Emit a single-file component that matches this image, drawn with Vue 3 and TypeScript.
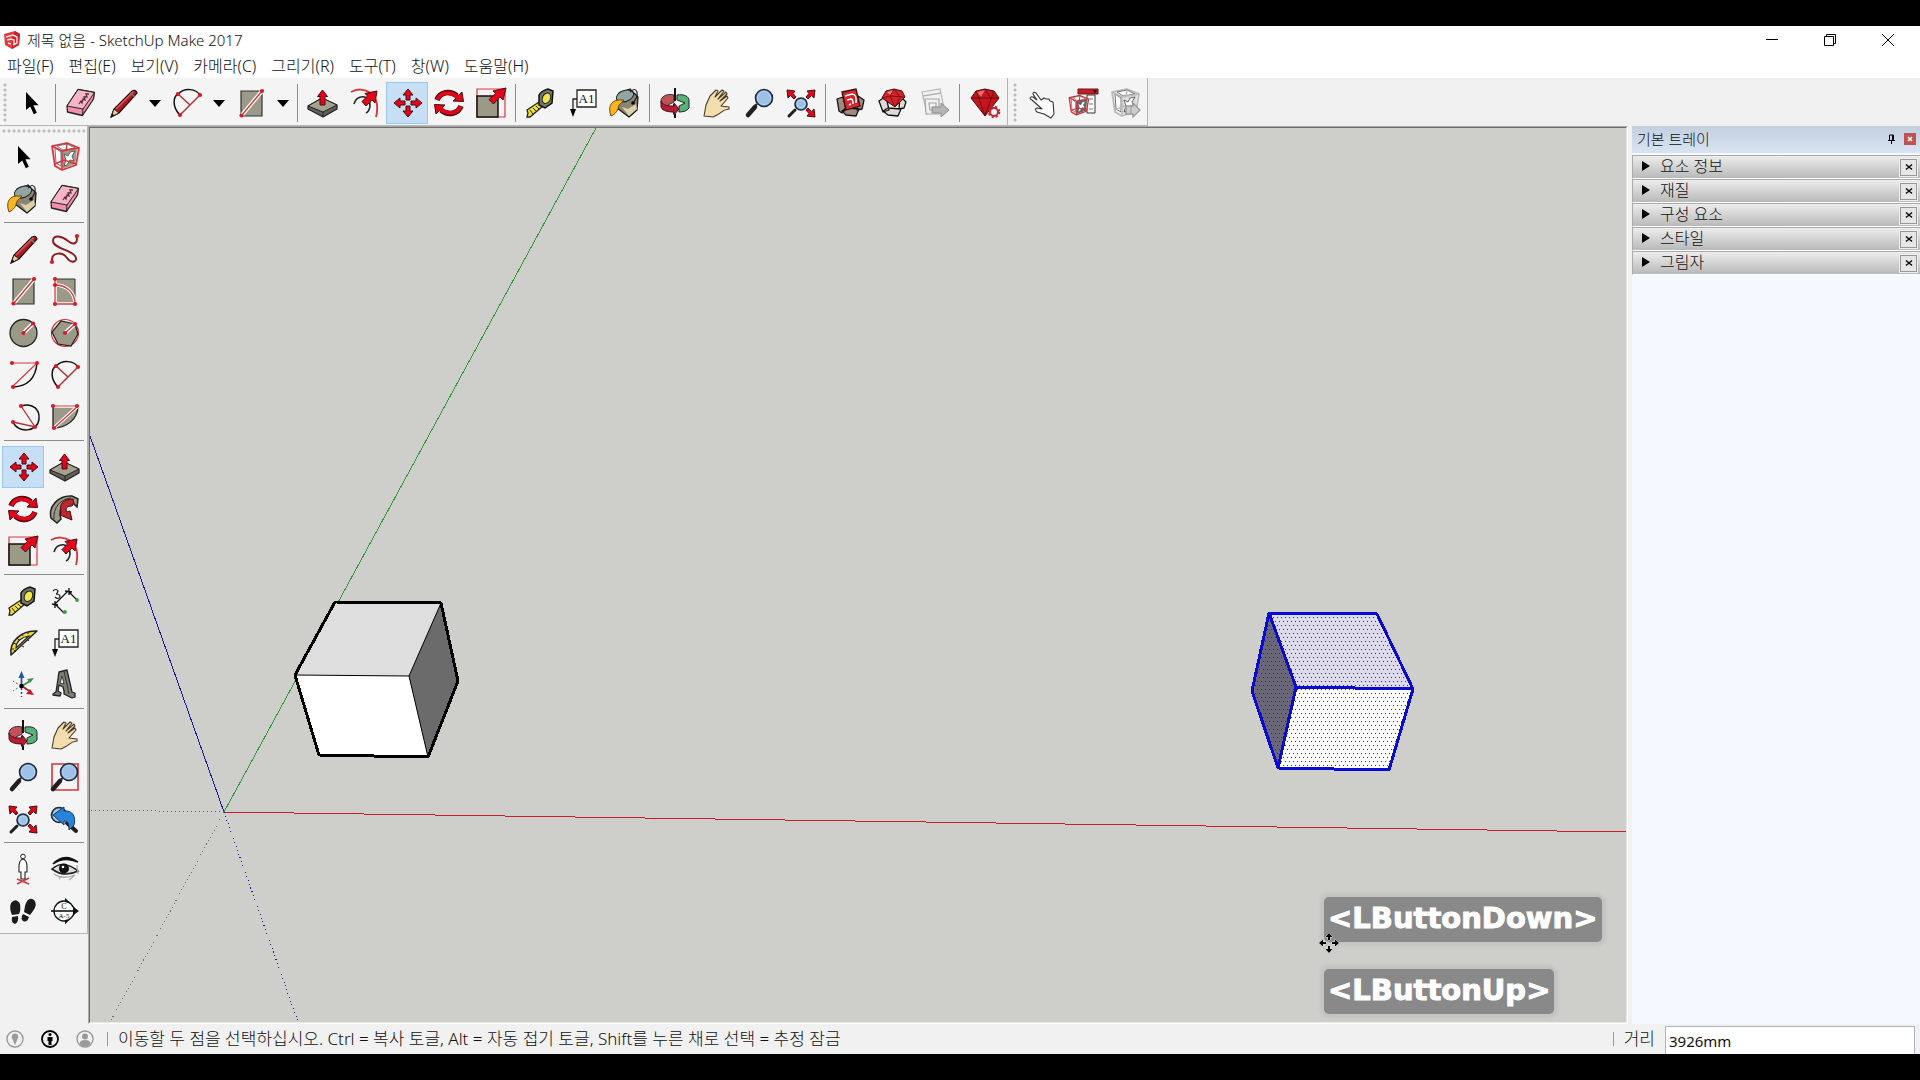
<script setup lang="ts">
import { ref } from 'vue'

type Tool = { icon: string; label: string; menu?: boolean }

const cube = (ink: string, fill: string, face: string) =>
  `<path d="M3 5l15-3 12 5-3 17-14 5-7-4z" fill="${fill}" stroke="${ink}" stroke-width="1.700" stroke-linejoin="round"/>
   <path d="M13 10l15-2-2 15-13 5z" fill="${face}"/>
   <path d="M6 7l6 4v14l-5-3zM8 5l10-2 8 4-12 2z" fill="#fff" stroke="#555" stroke-width=".8"/>
   <path d="M15 13l4 2 2-4 5-1-3 5 2 5-4-1-3 5-3 1 2-6z" fill="#fff" stroke="#444" stroke-width=".8"/>
   <path d="M3 5l10 5 17-3M13 10v18M18 3l-1 6M6 23l9-4 12 4" fill="none" stroke="${ink}" stroke-width="1.400"/>`

const lens = (cx: number, cy: number, r: number) =>
  `<circle cx="${cx}" cy="${cy}" r="${r}" fill="#8fb3dc" stroke="#1d2a3c" stroke-width="1.6"/>
   <circle cx="${cx}" cy="${cy}" r="${r - 2}" fill="#9cc0e6" stroke="#b9d2ec" stroke-width="1"/>`

const redArrow = 'fill="#e3061b" stroke="#4a0a0e" stroke-width="1" stroke-linejoin="round"'
const dot = (x: number, y: number) => `<circle cx="${x}" cy="${y}" r="2.1" fill="#d61a28"/>`

const icons: Record<string, string> = {
  select: '<path d="M11 5v18l4.200-3.600 3.600 7.800 3-1.400-3.400-7.600h5.200z" fill="#000"/>',
  component: cube('#d8323c', '#f9e3e4', '#9b9a86'),
  eraser: `<path d="M2 19L13 2.500 29.500 5.500 28.500 12 17.500 28.500 2.500 25z" fill="#f58fae" stroke="#222" stroke-width="1.3" stroke-linejoin="round"/>
    <path d="M13 2.500l16.500 3L18 22 2 19z" fill="#f9b5c8" stroke="#222" stroke-width="1"/><path d="M18 22l-.5 6" stroke="#222"/>
    <path d="M14 17l2-3 1 2 1-4 2 1-1-3 3 0-1-3 3 0" fill="none" stroke="#5a2b3b" stroke-width="1.3"/>`,
  pencil: `<path d="M4 30l3-8L25 4q4-2 5 2L12 26z" fill="#a81d25" stroke="#2a0a0b" stroke-width="1.2"/>
    <path d="M9 22L26.500 4.500" stroke="#df5a5c" stroke-width="1.500"/><path d="M4 30l3-8 5 4z" fill="#e6cf9c" stroke="#222"/><path d="M4 30l1.200-3.500 2.400 2z" fill="#111"/>
    <path d="M23 6l5 4" stroke="#777" stroke-width="1.600"/>`,
  freehand: `<path d="M3 29C2 18 14 19 18 25s12 4 8-2S4 15 4 8 13 3 19 8s11 2 8-6" fill="none" stroke="#8e1b23" stroke-width="1.900"/>${dot(3, 29)}${dot(28, 3)}`,
  rect: `<path d="M6 4h21v25H6z" fill="#9b9a86" stroke="#333" stroke-width="1.200"/><path d="M7 28L27 4" stroke="#fff" stroke-width="4"/><path d="M7 28L27 4" stroke="#c63a42" stroke-width="1.400"/>${dot(6.5, 28.5)}${dot(27, 4)}`,
  rotrect: `<path d="M6 4h20v25H6z" fill="#9b9a86" stroke="#333"/><path d="M6 4v25h20C26 17 17 10 6 10" fill="none" stroke="#fff" stroke-width="3.500"/><path d="M6 4v25h20C26 17 17 10 6 10" fill="none" stroke="#d23a42" stroke-width="1.300"/>${dot(6, 4)}${dot(6, 10)}${dot(6, 29)}${dot(26, 29)}`,
  circle: `<circle cx="16.500" cy="16" r="13.500" fill="#9b9a86" stroke="#222" stroke-width="1.300"/><path d="M16.500 16l9-9" stroke="#fff" stroke-width="4"/><path d="M16.500 16l9-9" stroke="#c63a42" stroke-width="1.400"/>${dot(16.5, 16)}${dot(26, 6.5)}`,
  polygon: `<circle cx="16" cy="16" r="13.500" fill="#fbeeee" stroke="#d6343c" stroke-width="1.200"/><path d="M26 7L12 4 3 15l6 12 13 2 7-12z" fill="#9b9a86" stroke="#222" stroke-width="1.200"/><path d="M16 16l10-9" stroke="#fff" stroke-width="4"/><path d="M16 16l10-9" stroke="#c63a42" stroke-width="1.400"/>${dot(16, 16)}${dot(26, 7)}`,
  arc: `<path d="M30 4Q28 27 6 28" fill="none" stroke="#111" stroke-width="1.500"/><path d="M5 4h25L5 28" fill="none" stroke="#d6343c" stroke-width="1.100"/>${dot(5, 4)}${dot(30, 4)}${dot(6, 28)}`,
  arc2: `<path d="M9 28C1 20 2 10 7 7c7-7 18-5 22 1" fill="none" stroke="#111" stroke-width="1.500"/><path d="M29 8L9 28M7 7l12 11" fill="none" stroke="#b33138" stroke-width="1.500"/>${dot(29, 8)}${dot(9, 28)}${dot(7, 7)}`,
  arc3: `<path d="M14 5C26 1 33 9 32 18c-1 13-21 15-26 3" fill="none" stroke="#111" stroke-width="1.500"/><path d="M14 5l14 21-22-5" fill="none" stroke="#b33138" stroke-width="1.300"/>${dot(14, 5)}${dot(28, 26)}${dot(6, 21)}`,
  pie: `<path d="M4 5h25C29 18 18 27 4 27z" fill="#9b9a86" stroke="#222" stroke-width="1.300"/><path d="M5 27L29 5H4" fill="none" stroke="#fff" stroke-width="3.500"/><path d="M5 27L29 5H4" fill="none" stroke="#d6343c" stroke-width="1.200"/>${dot(4, 5)}${dot(28, 5)}${dot(5, 27)}`,
  move: `<g ${redArrow}><path d="M17 2l5 6h-3v5h-4V8h-3z"/><path d="M17 30l5-6h-3v-5h-4v5h-3z"/><path d="M3 16l6-5v3h5v4H9v3z"/><path d="M31 16l-6-5v3h-5v4h5v3z"/></g>`,
  pushpull: `<path d="M1 19l14-8 15 7v4L16 30 1 22z" fill="#5f6057" stroke="#222" stroke-width="1.300" stroke-linejoin="round"/><path d="M1 19l14-8 15 7-14 7z" fill="#a3a28f" stroke="#222" stroke-linejoin="round"/><path d="M16 25v5" stroke="#222"/><path d="M15.500 3l5 6.500h-2.500V18h-5V9.500h-2.500z" ${redArrow}/>`,
  rotate: `<g fill="none" stroke="#4a0a0e" stroke-width="5.500"><path d="M4 13C7 5 17 3 24 9"/><path d="M28 19C25 27 15 29 8 23"/></g>
    <g ${redArrow}><path d="M20 14l10.500.5L29 5z"/><path d="M12 18L1.500 17.500 3 27z"/></g>
    <g fill="none" stroke="#e3061b" stroke-width="3.800"><path d="M4.500 12.500C8 5 17 4 25 10"/><path d="M27.500 19.500C24 27 15 28 7 22"/></g>`,
  follow: `<path d="M2 25C-1 13 10 2 23 3l6 3-1 8-4-4C13 8 9 17 12 26l-4 4z" fill="#9b9a86" stroke="#222" stroke-width="1.500"/><path d="M5 26C4 15 11 6 22 5" fill="none" stroke="#333"/><path d="M24 6C14 6 10 11 12 19l-1 3 12 5-2-9-3 1c-2-4 0-6 5-6l2-3z" fill="#bd2630" stroke="#4a0a0e"/>`,
  scale: `<path d="M2 2h28v28H2z" fill="#faf1f2" stroke="#d23a42" stroke-width="1.200"/><path d="M2 9h21v21H2z" fill="#9b9a86" stroke="#111" stroke-width="1.500"/><path d="M31 1l-3 12-3-3-6.500 7-4.500-4.500 6.500-6L18 4z" ${redArrow}/>`,
  offset: `<path d="M2 5c12-7 31 1 25 25" fill="none" stroke="#d23a42" stroke-width="1.900"/><path d="M5 17c2-10 17-10 16 2-.5 4-2 6-4 7" fill="none" stroke="#222" stroke-width="1.600"/><path d="M28 4l-2 12-3-3-6 6-4-4.500 5.500-5.500-2.500-2.500z" ${redArrow}/>`,
  tape: `<path d="M2 23l12-8 4 4L5 30H2l1-4z" fill="#eee12d" stroke="#222" stroke-width="1.300"/><path d="M5 23l3 4M8 21l3 3M11 19l3 3" stroke="#222"/><path d="M14 8q2-4 9-6l5 2-1 12-7 5-6-3z" fill="#75746b" stroke="#111" stroke-width="1.500"/><ellipse cx="21.500" cy="11" rx="4" ry="5.500" fill="#f0e54a" stroke="#222" transform="rotate(25 21 11)"/>`,
  dimension: `<path d="M6 19L19 6M3 19l6 1M6 16v7M16 6l7 1M20 3v7M19 6l9 9M6 19l9 9" fill="none" stroke="#111" stroke-width="1.300"/><path d="M4 6q3-3 5 0-1 3-2 3 4 0 4 3-2 3-5 0" fill="none" stroke="#111" stroke-width="1.200"/><circle cx="28" cy="15" r="1.900" fill="#3c9c44"/><circle cx="16" cy="27" r="1.900" fill="#3c9c44"/>`,
  protractor: `<path d="M4 28C2 14 15 3 30 4z" fill="#e9d84e" stroke="#222" stroke-width="1.500" stroke-linejoin="round"/><path d="M9 21c0-7 6-11 13-12z" fill="#f4f4f4" stroke="#222" stroke-width="1.200"/><path d="M4 22l3 0M6 16l3 1M10 11l2 2M15 7l1 2M21 5l0 2M9 25l-2-2M15 19l2 1M21 13l1 1" stroke="#222"/>`,
  text: `<path d="M10 3h19v17H10z" fill="#fff" stroke="#222" stroke-width="1.300"/><path d="M10 12H6v12" fill="none" stroke="#222" stroke-width="1.300"/><path d="M3 22h6l-3 8z" fill="#000"/><text x="19.500" y="16" text-anchor="middle" font-family="Liberation Serif, serif" font-size="13" fill="#111">A1</text>`,
  axes: `<path d="M14.500 17V7" stroke="#2554a4" stroke-width="1.800"/><path d="M14.500 2l3 7h-6z" fill="#2554a4"/><path d="M15 17l8-5" stroke="#438b51" stroke-width="1.800"/><path d="M27 9l-7 1 3 4z" fill="#438b51"/><path d="M15 17l7 5" stroke="#a42630" stroke-width="1.800"/><path d="M27 26l-8-1 4-5z" fill="#c31d2b"/><path d="M14.500 19v9" stroke="#334c91" stroke-width="1.500" stroke-dasharray="2 2"/><path d="M14 17l-8 5" stroke="#3a8a4a" stroke-dasharray="2 2"/><path d="M14 17l-8-5" stroke="#a33" stroke-dasharray="2 2"/><circle cx="14.500" cy="17" r="2.200"/>`,
  text3d: `<path d="M4 25l3-2 3-20 8-2 5 22 3 1v4l-3 1-8-4v-3l-1-4-4-2-1 6 3 2-1 3-7-1z" fill="#7f7e71" stroke="#222" stroke-width="1.300" stroke-linejoin="round"/><path d="M11 14l2-7 2 8z" fill="#f4f4f4" stroke="#222" stroke-width=".8"/><path d="M15 2l5 23" stroke="#333"/>`,
  paint: `<path d="M10 6l11-4 8 8-1 13-8 7-12-9z" fill="#8b8476" stroke="#1b1b1b" stroke-width="1.300" stroke-linejoin="round"/><ellipse cx="16" cy="9" rx="9" ry="5.500" transform="rotate(-20 16 9)" fill="#91a5a4" stroke="#222"/><path d="M13 20l7 9 8-7-1-5-8 5z" fill="#ddd2a6"/><path d="M9 13C1 14-1 21 2 29c5-2 7-6 8-11l5-5z" fill="#f8b51c" stroke="#6f4b0a"/><path d="M21 5q5-5 7 0 1 5-4 11" fill="none" stroke="#222" stroke-width="1.200"/><circle cx="24" cy="16" r="1.800"/>`,
  orbit: `<path d="M15 8C7 6 2 10 2 14l1 7 7 2-1-5 6-3z" fill="#c05259" stroke="#333"/><path d="M18 8c7-1 12 1 12 6v7c-2 3-6 4-10 4v-6l6-3-8-3z" fill="#58b277" stroke="#222"/><path d="M15 17v10" stroke="#111" stroke-width="2"/><path d="M2 14c2 5 8 5 13 5v-3l5 6-5 6v-3C7 25 2 23 2 19z" fill="#b61c33" stroke="#46101a"/><path d="M16 1v13M16 27v4" stroke="#111" stroke-width="2"/>`,
  pan: `<path d="M3 29l2-11L9 9l6-6 2 1-3 6 7-7 2 1-6 8 8-7 1 2-7 7 7-5 1 2-7 8 8 1v2c-8 1-7 4-12 6l-4 2z" fill="#f3dcae" stroke="#493b29" stroke-width="1.100" stroke-linejoin="round"/>`,
  zoom: `<path d="M5 28l7-8" stroke="#1f1f1f" stroke-width="4.500" stroke-linecap="round"/><path d="M12 19l2-2" stroke="#222" stroke-width="2"/>${lens(21, 11, 8.5)}`,
  zoomwin: `<path d="M3 3h26v26H3z" fill="none" stroke="#d8323c" stroke-width="1.600"/><path d="M4 28l7-8" stroke="#1f1f1f" stroke-width="4.500" stroke-linecap="round"/><path d="M11 19l3-2" stroke="#222" stroke-width="2"/>${lens(20, 11, 8.5)}`,
  extents: `<g ${redArrow}><path d="M2 3l8 1-2 2.500 3 3.500-2 2-3.500-3.500L3 11z"/><path d="M30 3l-8 1 2 2.500-3 3.500 2 2 3.500-3.500L29 11z"/><path d="M30 30l-8-1 2-2.500-3-3.500 2-2 3.500 3.500L29 22z"/></g><path d="M4 29l6-6" stroke="#1f1f1f" stroke-width="3" stroke-linecap="round"/>${lens(16, 17, 6)}`,
  previous: `<path d="M18 20l9 8" stroke="#1f1f1f" stroke-width="4" stroke-linecap="round"/>${lens(10, 12, 7.5)}<path d="M4 12l11-8v4c9-1 12 6 10 14l-5 5c0-7-1-9-5-9v4z" fill="#2884d8" stroke="#173962"/>`,
  camera: `<path d="M10 31l12-6M10 26l12 5" stroke="#d23a42" stroke-width="1.500"/><circle cx="16" cy="3.500" r="2.300" fill="#fff" stroke="#222"/><path d="M16 6q4 1 4 8v5h-2v7h-4v-7h-2v-5q0-7 4-8z" fill="#fff" stroke="#222" stroke-width="1.100"/>`,
  look: `<path d="M4 11Q15-1 29 9 15 3 4 11z" fill="#111" stroke="#111" stroke-width="1.500"/><path d="M3 16Q14 6 29 18 15 25 3 16z" fill="#ddd" stroke="#222" stroke-width="1.600"/><circle cx="15" cy="15.500" r="5" fill="#111"/><circle cx="14" cy="14" r="1.300" fill="#fff"/><path d="M5 21q8 6 21 1M10 26l3-3M20 27l6-5M28 12l1 9" fill="none" stroke="#aaa" stroke-width="1.300"/>`,
  walk: `<g fill="#1b1b1b"><path d="M4 8q5-6 9 1 1 6-1 10l-7 1Q2 13 4 8z"/><path d="M5 22l6-1q1 6-3 8-4-1-3-7z"/><path d="M18 11q3-10 9-6 4 4-1 11l-3 4-6-3z"/><path d="M16 19l6 3q-2 6-6 4-3-2 0-7z"/></g>`,
  section: `<path d="M16 3l13 13-13 13z" fill="#111"/><circle cx="15" cy="16" r="10" fill="#fff" stroke="#111" stroke-width="1.300"/><path d="M16 3l5 5-5-1zM16 29l5-5-5 1z" fill="#111"/><path d="M2 16h27" stroke="#111" stroke-width="1.600"/><path d="M24 12l6 4-6 4z" fill="#111"/><text x="15" y="14" text-anchor="middle" font-family="Liberation Serif, serif" font-size="8">C</text><text x="15" y="23" text-anchor="middle" font-family="Liberation Serif, serif" font-size="7">A-5</text>`,
  warehouse: `<path d="M2 12l6-2 3 12-4 4-3-2zM29 13l-6-4-1 14 5-1zM7 24l4-3 13 1-3 7-10-1z" fill="#a08a7e" stroke="#111" stroke-width="1.300" stroke-linejoin="round"/><path d="M7 5l14-3 4 17-14 4z" fill="#d3272f" stroke="#3d080b" stroke-width="1.300"/><path d="M10 9l7-2q5 0 4 9M12 13l4-1q2 0 2 5M14 18l2-1" fill="none" stroke="#fff" stroke-width="1.500"/>`,
  extensions: `<path d="M2 14l7-5 3 14-6 2zM29 15l-6-6-1 13 5-1zM6 24l5-3 13 1-3 7-10-1z" fill="#dedbd5" stroke="#111" stroke-width="1.300" stroke-linejoin="round"/><path d="M9 4l8-2 8 2 3 6-10 10L5 11z" fill="#d3242c" stroke="#4b0a0e"/><path d="M5 11l8-2 15 1M13 9l4-7 6 8-5 10z" fill="none" stroke="#7a1016"/><path d="M10 5l6-2-3 5z" fill="#f07b7d"/>`,
  share: `<path d="M3 5l18-3 4 19-17 6z" fill="#f2f2f2" stroke="#b5b5b5" stroke-width="1.200"/><path d="M4 9l18-3" stroke="#b5b5b5" stroke-width="1.500"/><path d="M6 12h14v15H7z" fill="#f0f0f0" stroke="#a5a5a5" stroke-width="1.200"/><path d="M10 16h7v7h-6z" fill="none" stroke="#a5a5a5" stroke-width="1.200"/><path d="M13 20h9v-4l8 7-8 7v-4h-9z" fill="#b5b5b5" stroke="#8c8c8c"/>`,
  ruby: `<path d="M2 11l5-7 9-2 9 2 5 7-14 18z" fill="#c4161e" stroke="#4e090d"/><path d="M2 11h28M7 4l3 8 6-10 6 10 3-8M10 12l6 17 6-17" fill="none" stroke="#75090f"/><path d="M8 5l8-2-4 7z" fill="#ed6d6f"/><circle cx="25" cy="25" r="4" fill="#f4f4f4" stroke="#b8272f" stroke-width="2"/><circle cx="25" cy="25" r="5.500" fill="none" stroke="#b8272f" stroke-width="1.600" stroke-dasharray="2.200 2.200"/>`,
  interact: `<path d="M7 13C4 12 5 9 8 10l4 3-4-6q0-3 3-1l5 7 3-2 2 1 3 0 1 2 3 1 1 12-3 4-7-4-7-2q-3-3 0-4l5 1z" fill="#fff" stroke="#333" stroke-width="1.100" stroke-linejoin="round"/>`,
  options: `<path d="M11 2h20v5H11z" fill="#bd1f2b" stroke="#70121a"/><path d="M26 3.500h4l-2 2.500z"/><path d="M20 8h8v18h-8z" fill="#fff" stroke="#333"/><path d="M22 12h4M22 17h4M22 22h4" stroke="#777"/><g transform="translate(0 7) scale(.72)">${cube('#c9323c', '#f4c9cb', '#666')}</g>`,
  attributes: `${cube('#b9b9b9', '#f0f0f0', '#ddd')}<path d="M17 19h7v-3l7 7-7 7v-3h-7z" fill="#ccc" stroke="#999" stroke-width="1.300"/><path d="M22 19v8" stroke="#999"/>`,
}

const topGroups: Tool[][] = [
  [{ icon: 'select', label: '선택' }],
  [
    { icon: 'eraser', label: '지우개' },
    { icon: 'pencil', label: '선', menu: true },
    { icon: 'arc2', label: '호', menu: true },
    { icon: 'rect', label: '직사각형', menu: true },
  ],
  [
    { icon: 'pushpull', label: '밀기/끌기' },
    { icon: 'offset', label: '오프셋' },
    { icon: 'move', label: '이동' },
    { icon: 'rotate', label: '회전' },
    { icon: 'scale', label: '배율' },
  ],
  [
    { icon: 'tape', label: '줄자' },
    { icon: 'text', label: '텍스트' },
    { icon: 'paint', label: '페인트통' },
  ],
  [
    { icon: 'orbit', label: '궤도' },
    { icon: 'pan', label: '이동 보기' },
    { icon: 'zoom', label: '확대/축소' },
    { icon: 'extents', label: '범위 확대' },
  ],
  [
    { icon: 'warehouse', label: '3D Warehouse' },
    { icon: 'extensions', label: 'Extension Warehouse' },
    { icon: 'share', label: '모델 공유' },
  ],
  [{ icon: 'ruby', label: '확장 관리자' }],
]

const dynamicTools: Tool[] = [
  { icon: 'interact', label: '상호 작용' },
  { icon: 'options', label: '구성 요소 옵션' },
  { icon: 'attributes', label: '구성 요소 속성' },
]

const sideGroups: string[][] = [
  ['select', 'component', 'paint', 'eraser'],
  ['pencil', 'freehand', 'rect', 'rotrect', 'circle', 'polygon', 'arc', 'arc2', 'arc3', 'pie'],
  ['move', 'pushpull', 'rotate', 'follow', 'scale', 'offset'],
  ['tape', 'dimension', 'protractor', 'text', 'axes', 'text3d'],
  ['orbit', 'pan', 'zoom', 'zoomwin', 'extents', 'previous'],
  ['camera', 'look', 'walk', 'section'],
]

const menus = ['파일(F)', '편집(E)', '보기(V)', '카메라(C)', '그리기(R)', '도구(T)', '창(W)', '도움말(H)']
const panels = ['요소 정보', '재질', '구성 요소', '스타일', '그림자']
const keys = ['<LButtonDown>', '<LButtonUp>']

const active = ref('move')
const distance = ref('3926mm')
</script>

<template>
  <div class="screen">
    <div class="window">
      <header class="titlebar">
        <svg class="logo" viewBox="0 0 18 20">
          <path d="M1 4l11-3 5 3-1 11-7 4-7-4z" fill="#df3a3c" />
          <path d="M12 1l5 3-1 11-7 4V8z" fill="#c9242b" />
          <path d="M3 7l7-2 4 2v6l-4 2M4 10l4-1 3 1v4M5 13l3 1" fill="none" stroke="#fbdcdc" stroke-width="1.4" />
        </svg>
        <h1>제목 없음 - SketchUp Make 2017</h1>
        <div class="window-buttons">
          <button type="button" aria-label="최소화"><svg viewBox="0 0 12 12"><path d="M0 5.500h12" /></svg></button>
          <button type="button" aria-label="이전 크기로"><svg viewBox="0 0 12 12"><path d="M.5 2.500h9v9h-9zM2.500 2.500v-2h9v9h-2" /></svg></button>
          <button type="button" aria-label="닫기"><svg viewBox="0 0 12 12"><path d="M0 0l12 12M12 0L0 12" /></svg></button>
        </div>
      </header>

      <nav class="menubar">
        <button v-for="m in menus" :key="m" type="button">{{ m }}</button>
      </nav>

      <div class="toolbars">
        <div class="toolbar" role="toolbar">
          <span class="grip"></span>
          <template v-for="(group, g) in topGroups" :key="g">
            <span v-if="g" class="divider"></span>
            <template v-for="tool in group" :key="tool.icon">
              <button type="button" class="tool" :class="{ on: active === tool.icon }" :aria-label="tool.label" @click="active = tool.icon">
                <svg viewBox="0 0 32 32" v-html="icons[tool.icon]"></svg>
              </button>
              <button v-if="tool.menu" type="button" class="more" :aria-label="tool.label + ' 메뉴'"></button>
            </template>
          </template>
        </div>
        <div class="toolbar" role="toolbar">
          <span class="grip"></span>
          <button v-for="tool in dynamicTools" :key="tool.icon" type="button" class="tool" :aria-label="tool.label">
            <svg viewBox="0 0 32 32" v-html="icons[tool.icon]"></svg>
          </button>
        </div>
      </div>

      <div class="work">
        <aside class="side">
          <div class="palette">
            <span class="side-grip"></span>
            <div v-for="(group, g) in sideGroups" :key="g" class="side-group">
              <button v-for="icon in group" :key="icon" type="button" class="tool" :class="{ on: active === icon }" :aria-label="icon" @click="active = icon">
                <svg viewBox="0 0 32 32" v-html="icons[icon]"></svg>
              </button>
            </div>
          </div>
        </aside>

        <main class="viewport">
          <div class="canvas">
            <svg class="scene" viewBox="90 128 1536 894" preserveAspectRatio="xMinYMin slice">
              <defs>
                <pattern id="dots" width="4" height="8" patternUnits="userSpaceOnUse">
                  <rect x="1" y="1" width="1" height="1" fill="#333" />
                  <rect x="3" y="5" width="1" height="1" fill="#333" />
                </pattern>
              </defs>
              <g fill="none" stroke-width="1" shape-rendering="crispEdges">
                <path d="M224 812L596 128" stroke="#2f9a36" />
                <path d="M224 812L90 436" stroke="#1616b4" />
                <path d="M224 812L1626 832" stroke="#c81e28" />
                <path d="M224 812L90 810" stroke="#c03038" stroke-dasharray="1 3" />
                <path d="M224 812L298 1022" stroke="#1616b4" stroke-dasharray="1 3" />
                <path d="M224 812L110 1022" stroke="#5c7a5c" stroke-dasharray="1 3" />
              </g>
              <g stroke-linejoin="round">
                <path d="M335 602L441 603 409 676 295 675z" fill="#dedede" />
                <path d="M295 675L409 676 428 757 319 755z" fill="#fff" />
                <path d="M441 603L458 681 428 757 409 676z" fill="#6b6b6b" />
                <path d="M295 675L409 676 441 603M409 676L428 757" fill="none" stroke="#000" stroke-width="1" />
                <path d="M335 602L441 603 458 681 428 757 319 755 295 675z" fill="none" stroke="#000" stroke-width="3" shape-rendering="crispEdges" />
              </g>
              <g stroke-linejoin="round">
                <path d="M1269 613L1377 614 1413 689 1296 687z" fill="#dcd9ea" />
                <path d="M1296 687L1413 689 1389 770 1278 768z" fill="#fff" />
                <path d="M1269 613L1296 687 1278 768 1252 691z" fill="#6a6878" />
                <path d="M1269 613L1377 614 1413 689 1389 770 1278 768 1252 691z" fill="url(#dots)" />
                <g fill="none" stroke="#0a0ad0" stroke-width="3" shape-rendering="crispEdges">
                  <path d="M1269 613L1377 614 1413 689 1389 770 1278 768 1252 691z" />
                  <path d="M1269 613L1296 687 1278 768M1296 687L1413 689" />
                </g>
              </g>
            </svg>
            <div class="keys">
              <kbd v-for="k in keys" :key="k">{{ k }}</kbd>
              <svg class="cursor" viewBox="0 0 20 20">
                <path d="M10 0l3.500 4H11v3H9V4H6.500zM10 20l3.500-4H11v-3H9v3H6.500zM0 10l4-3.500V9h3v2H4v2.500zM20 10l-4-3.500V9h-3v2h3v2.500z" stroke="#e8e8e8" stroke-width="1" paint-order="stroke" />
              </svg>
            </div>
          </div>
        </main>

        <aside class="tray">
          <header>
            <h2>기본 트레이</h2>
            <button type="button" class="pin" aria-label="고정">
              <svg viewBox="0 0 9 10"><path d="M2.500 6V1h4v5M5.500 1v5M1 6.500h7M4.500 7v3" fill="none" stroke="#000" /></svg>
            </button>
            <button type="button" class="tray-close" aria-label="트레이 닫기">
              <svg viewBox="0 0 6 6"><path d="M1 1l4 4M5 1L1 5" stroke="#fff" stroke-width="1.6" /></svg>
            </button>
          </header>
          <section v-for="p in panels" :key="p" class="panel">
            <button type="button" class="panel-title"><i></i><span>{{ p }}</span></button>
            <button type="button" class="panel-close" :aria-label="p + ' 닫기'">
              <svg viewBox="0 0 8 8"><path d="M1 1.500l6 5M7 1.500l-6 5" stroke="#111" stroke-width="1.600" /></svg>
            </button>
          </section>
        </aside>
      </div>

      <footer class="status">
        <div class="status-icons">
          <button type="button" aria-label="지리적 위치">
            <svg viewBox="0 0 18 18"><circle cx="9" cy="9" r="8" fill="none" stroke="#999" stroke-width="1.400" /><path d="M9 15L5.800 7.500a3.300 3.300 0 1 1 6.400 0z" fill="#999" /></svg>
          </button>
          <button type="button" aria-label="저작자">
            <svg viewBox="0 0 18 18"><circle cx="9" cy="9" r="8" fill="none" stroke="#000" stroke-width="1.800" /><circle cx="9" cy="4.500" r="1.500" /><path d="M6.500 7h5v4h-1v4h-3v-4h-1z" /></svg>
          </button>
          <button type="button" aria-label="로그인">
            <svg viewBox="0 0 18 18"><circle cx="9" cy="9" r="8" fill="none" stroke="#999" stroke-width="1.400" /><circle cx="9" cy="6.500" r="3" fill="#999" /><path d="M3.500 14q0-4 5.500-4t5.500 4l-3 2h-5z" fill="#999" /></svg>
          </button>
        </div>
        <p>이동할 두 점을 선택하십시오. Ctrl = 복사 토글, Alt = 자동 접기 토글, Shift를 누른 채로 선택 = 추정 잠금</p>
        <label for="distance">거리</label>
        <input id="distance" v-model="distance" type="text" />
      </footer>
    </div>
  </div>
</template>

<style>
body {
  margin: 0;
  background: #000;
}
</style>

<style scoped>
* {
  box-sizing: border-box;
}

.screen {
  min-height: 100vh;
  padding: 26px 0;
  display: flex;
  background: #000;
  color: #111;
  font: 15px/20px 'Noto Sans', 'Noto Sans CJK KR', sans-serif;
}

.window {
  flex: 1;
  min-width: 0;
  display: flex;
  flex-direction: column;
  background: #f1f1f1;
}

button {
  padding: 0;
  border: 0;
  background: none;
  color: inherit;
  font: inherit;
  line-height: inherit;
  white-space: nowrap;
}

h1,
h2,
p {
  margin: 0;
  font-size: inherit;
  font-weight: inherit;
  white-space: nowrap;
}

svg {
  display: block;
}

.titlebar {
  height: 28px;
  padding-left: 3px;
  display: flex;
  align-items: center;
  background: #fff;
}

.titlebar,
.menubar,
.tray,
.status p,
.status label {
  font-weight: 300;
}

.logo {
  width: 18px;
  height: 20px;
  margin-right: 6px;
}

.window-buttons {
  margin-left: auto;
  display: flex;
}

.window-buttons button {
  width: 58px;
  height: 28px;
  display: grid;
  place-items: center;
}

.window-buttons svg {
  width: 12px;
  height: 12px;
  fill: none;
  stroke: #000;
}

.window-buttons button:last-child {
  margin-right: 3px;
}

.menubar {
  height: 24px;
  padding-left: 7px;
  display: flex;
  align-items: center;
  gap: 15px;
  background: #fff;
  font-size: 16px;
}

.toolbars {
  height: 48px;
  display: flex;
  background: #f0f0f0;
}

.toolbar {
  padding: 3px 1px 0 0;
  display: flex;
  align-items: center;
  background: #f4f4f4;
  border-right: 1px solid #b4b4b4;
  border-bottom: 1px solid #b4b4b4;
}

.toolbar + .toolbar {
  padding-left: 2px;
}

.grip {
  width: 10px;
  height: 40px;
  background: radial-gradient(circle at 5px 2px, #bbb 1px, transparent 2px) 0 0 / 10px 5px;
}

.divider {
  width: 8px;
  height: 38px;
  background: linear-gradient(#8c8c8c, #8c8c8c) 3px 0 / 1px 100% no-repeat;
}

.tool {
  width: 42px;
  height: 42px;
  display: grid;
  place-items: center;
  border: 1px solid transparent;
}

.tool.on {
  background: #c7dff5;
  border-color: #99c8f0;
}

.tool svg {
  width: 32px;
  height: 32px;
  overflow: visible;
}

.more {
  width: 22px;
  height: 42px;
  display: grid;
  place-items: center;
}

.more::before {
  content: '';
  border: 6px solid transparent;
  border-top: 7px solid #000;
  border-bottom: 0;
}

.work {
  flex: 1;
  min-height: 0;
  display: flex;
}

.side {
  width: 88px;
  flex: none;
}

.palette {
  padding-bottom: 1px;
  background: #f4f4f4;
  border-right: 1px solid #b4b4b4;
  border-bottom: 1px solid #b4b4b4;
}

.side-grip {
  display: block;
  height: 10px;
  margin: 0 2px;
  background: radial-gradient(circle at 2px 5px, #bbb 1px, transparent 2px) 0 0 / 5px 10px;
}

.side-group {
  padding-left: 2px;
  display: grid;
  grid-template-columns: 42px 42px;
}

.side-group + .side-group::before {
  content: '';
  grid-column: 1 / 3;
  height: 8px;
  margin: 0 2px;
  background: linear-gradient(#8c8c8c, #8c8c8c) 0 2px / 100% 1px no-repeat;
}

.viewport {
  flex: 1;
  min-width: 0;
  display: flex;
  border: 1px solid #a9a9a9;
  border-right-color: #fff;
  border-bottom-color: #fff;
}

.canvas {
  position: relative;
  flex: 1;
  overflow: hidden;
  background: #cecfcb;
  border: 1px solid #6c6c6c;
  border-right-color: #e8e8e8;
  border-bottom-color: #e8e8e8;
}

.scene {
  position: absolute;
  inset: 0;
  width: 100%;
  height: 100%;
}

.keys {
  position: absolute;
  right: 24px;
  bottom: 8px;
  width: 278px;
  display: flex;
  flex-direction: column;
  align-items: flex-start;
  gap: 27px;
}

kbd {
  height: 45px;
  padding: 0 4px;
  border-radius: 5px;
  background: #898989;
  box-shadow: 0 0 3px 4px #c3c3c2;
  color: #fff;
  font: bold 29px/42px 'DejaVu Sans', sans-serif;
  -webkit-text-stroke: 1px #fff;
}

.cursor {
  position: absolute;
  left: -5px;
  top: 36px;
  width: 20px;
  height: 20px;
}

.tray {
  width: 288px;
  margin-left: 4px;
  flex: none;
  background: #f5f8ff;
}

.tray header {
  height: 27px;
  margin-bottom: 2px;
  padding: 0 4px 2px 5px;
  display: flex;
  align-items: center;
  background: linear-gradient(#c3cede, #d8e3f3);
}

.pin {
  margin-left: auto;
}

.pin svg {
  width: 9px;
  height: 10px;
}

.tray-close {
  width: 12px;
  height: 12px;
  margin-left: 8px;
  display: grid;
  place-items: center;
  background: #c2504f;
}

.tray-close svg {
  width: 6px;
  height: 6px;
}

.panel {
  height: 24px;
  padding-right: 3px;
  display: flex;
  align-items: center;
  background: linear-gradient(#ededed, #b9b9b9);
  border: 1px solid #aaa;
  border-right: 0;
  border-bottom-color: #fff;
  font-size: 16px;
}

.panel-title {
  flex: 1;
  padding: 0 0 2px 9px;
  display: flex;
  align-items: center;
  gap: 10px;
  text-align: left;
}

.panel-title i {
  border: 5px solid transparent;
  border-left: 8px solid #000;
  border-right: 0;
}

.panel-close {
  width: 17px;
  height: 17px;
  display: grid;
  place-items: center;
  background: #e6e6e6;
  border: 1px solid #999;
  box-shadow: 0 0 0 1px #eee;
}

.panel-close svg {
  width: 8px;
  height: 8px;
}

.status {
  height: 30px;
  padding: 0 5px 0 6px;
  display: flex;
  align-items: center;
}

.status-icons {
  padding-right: 13px;
  display: flex;
  gap: 17px;
}

.status-icons svg {
  width: 18px;
  height: 18px;
}

.status p {
  padding-left: 10px;
  border-left: 1px solid #999;
  font-size: 17px;
  line-height: 14px;
}

.status label {
  margin-left: auto;
  padding: 0 10px;
  border-left: 1px solid #999;
  font-size: 17px;
  line-height: 14px;
}

.status input {
  width: 250px;
  height: 28px;
  margin-top: 2px;
  padding: 0 3px;
  border: 1px solid #a9b4c8;
  border-bottom: 0;
  background: #fff;
  color: #111;
  font: inherit;
}
</style>
